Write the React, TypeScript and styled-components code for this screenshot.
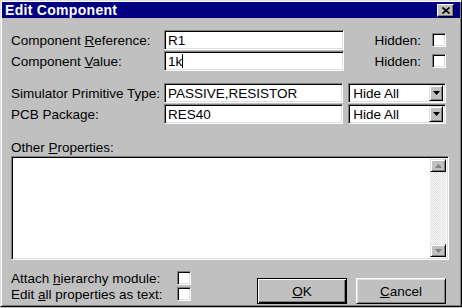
import React from 'react';
import styled, { createGlobalStyle } from 'styled-components';

const GlobalStyle = createGlobalStyle`
  html, body {
    margin: 0;
    padding: 0;
    background: #c0c0c0;
  }
  body {
    font-family: "Liberation Sans", Arial, sans-serif;
    font-size: 13.5px;
    color: #000;
  }
`;

const Window = styled.div`
  box-sizing: border-box;
  width: 462px;
  height: 307px;
  background: #c0c0c0;
  border: 1px solid;
  border-color: #dfdfdf #000 #000 #dfdfdf;
  box-shadow: inset 1px 1px #fff, inset -1px -1px #808080;
  padding: 1px;
  display: flex;
  flex-direction: column;
`;

const TitleBar = styled.div`
  height: 16px;
  background: #000080;
  display: flex;
  align-items: center;
  justify-content: space-between;
  padding: 0 6px 0 3px;
`;

const Title = styled.span`
  color: #fff;
  font-weight: bold;
  font-size: 14px;
  letter-spacing: 0.3px;
`;

const CloseButton = styled.div`
  box-sizing: border-box;
  width: 17px;
  height: 13px;
  background: #c0c0c0;
  border: 1px solid;
  border-color: #fff #000 #000 #fff;
  box-shadow: inset -1px -1px #808080;
  display: flex;
  align-items: center;
  justify-content: center;
`;

const Body = styled.div`
  flex: 1;
  display: flex;
  flex-direction: column;
  padding: 12px 14px 0 9px;
`;

const FieldGroup = styled.div<{ $mt?: number }>`
  display: flex;
  flex-direction: column;
  gap: 1px;
  margin-top: ${(p) => p.$mt ?? 0}px;
`;

const Row = styled.div`
  display: flex;
  align-items: center;
  height: 20px;
`;

const Label = styled.span`
  width: 153px;
  flex-shrink: 0;
  white-space: nowrap;
`;

const Key = styled.span`
  text-decoration: underline;
  text-underline-offset: 1px;
`;

const Field = styled.div`
  box-sizing: border-box;
  width: 180px;
  height: 20px;
  background: #fff;
  border: 1px solid;
  border-color: #808080 #fff #fff #808080;
  box-shadow: inset 1px 1px #000, inset -1px -1px #dfdfdf;
  padding: 0 3px;
  display: flex;
  align-items: center;
  white-space: nowrap;
`;

const Caret = styled.span`
  display: inline-block;
  width: 1px;
  height: 14px;
  background: #000;
`;

const HiddenGroup = styled.div`
  margin-left: auto;
  display: flex;
  align-items: center;
  gap: 11px;
`;

const CheckBox = styled.div`
  box-sizing: border-box;
  width: 14px;
  height: 14px;
  background: #fff;
  border: 1px solid;
  border-color: #808080 #fff #fff #808080;
  box-shadow: inset 1px 1px #000, inset -1px -1px #dfdfdf;
`;

const Select = styled.div`
  box-sizing: border-box;
  width: 98px;
  height: 20px;
  margin-left: 5px;
  background: #fff;
  border: 1px solid;
  border-color: #808080 #fff #fff #808080;
  box-shadow: inset 1px 1px #000, inset -1px -1px #dfdfdf;
  padding: 2px 2px 2px 4px;
  display: flex;
  align-items: center;
  justify-content: space-between;
`;

const ArrowButton = styled.div<{ $w?: number; $h?: number }>`
  box-sizing: border-box;
  width: ${(p) => p.$w ?? 14}px;
  height: ${(p) => p.$h ?? 16}px;
  background: #c0c0c0;
  border: 1px solid;
  border-color: #dfdfdf #000 #000 #dfdfdf;
  box-shadow: inset 1px 1px #fff, inset -1px -1px #808080;
  display: flex;
  align-items: center;
  justify-content: center;
  flex-shrink: 0;
`;

const SectionLabel = styled.div`
  margin-top: 17px;
  height: 14px;
  line-height: 14px;
`;

const TextBox = styled.div`
  box-sizing: border-box;
  width: 438px;
  height: 104px;
  margin-top: 1px;
  background: #fff;
  border: 1px solid;
  border-color: #808080 #fff #fff #808080;
  box-shadow: inset 1px 1px #000, inset -1px -1px #dfdfdf;
  padding: 2px;
  display: flex;
  justify-content: flex-end;
`;

const ScrollBar = styled.div`
  width: 16px;
  display: flex;
  flex-direction: column;
  justify-content: space-between;
  background-color: #fff;
  background-image: repeating-conic-gradient(#dcdcdc 0 25%, #fff 0 50%);
  background-size: 2px 2px;
`;

const Footer = styled.div`
  margin-top: 10px;
  height: 34px;
  display: flex;
  align-items: flex-end;
  justify-content: space-between;
`;

const OptionList = styled.div`
  display: flex;
  flex-direction: column;
  gap: 2px;
  padding-bottom: 3px;
`;

const OptionRow = styled.div`
  display: flex;
  align-items: center;
  height: 14px;
`;

const OptionLabel = styled.span`
  width: 166px;
  white-space: nowrap;
`;

const ButtonRow = styled.div`
  display: flex;
  gap: 9px;
`;

const Button = styled.div<{ $default?: boolean }>`
  box-sizing: border-box;
  width: 90px;
  height: 26px;
  background: #c0c0c0;
  display: flex;
  align-items: center;
  justify-content: center;
  border: 1px solid;
  border-color: ${(p) => (p.$default ? '#000' : '#fff #000 #000 #fff')};
  box-shadow: ${(p) =>
    p.$default
      ? 'inset 1px 1px #fff, inset -1px -1px #000, inset -2px -2px #808080'
      : 'inset 1px 1px #dfdfdf, inset -1px -1px #808080'};
`;

const DownArrow = ({ color = '#000' }: { color?: string }) => (
  <svg width="7" height="4" viewBox="0 0 7 4">
    <polygon points="0,0 7,0 3.5,4" fill={color} />
  </svg>
);

const UpArrow = ({ color = '#808080' }: { color?: string }) => (
  <svg width="7" height="4" viewBox="0 0 7 4">
    <polygon points="0,4 7,4 3.5,0" fill={color} />
  </svg>
);

const CloseIcon = () => (
  <svg width="8" height="7" viewBox="0 0 8 7">
    <path d="M0.5 0.5 L7.5 6.5 M7.5 0.5 L0.5 6.5" stroke="#000" strokeWidth="1.6" />
  </svg>
);

export default function App() {
  return (
    <>
      <GlobalStyle />
      <Window>
        <TitleBar>
          <Title>Edit Component</Title>
          <CloseButton>
            <CloseIcon />
          </CloseButton>
        </TitleBar>

        <Body>
          <FieldGroup>
            <Row>
              <Label>
                Component <Key>R</Key>eference:
              </Label>
              <Field>R1</Field>
              <HiddenGroup>
                <span>Hidden:</span>
                <CheckBox />
              </HiddenGroup>
            </Row>
            <Row>
              <Label>
                Component <Key>V</Key>alue:
              </Label>
              <Field>
                1k
                <Caret />
              </Field>
              <HiddenGroup>
                <span>Hidden:</span>
                <CheckBox />
              </HiddenGroup>
            </Row>
          </FieldGroup>

          <FieldGroup $mt={12}>
            <Row>
              <Label>Simulator Primitive Type:</Label>
              <Field>PASSIVE,RESISTOR</Field>
              <Select>
                <span>Hide All</span>
                <ArrowButton>
                  <DownArrow />
                </ArrowButton>
              </Select>
            </Row>
            <Row>
              <Label>PCB Package:</Label>
              <Field>RES40</Field>
              <Select>
                <span>Hide All</span>
                <ArrowButton>
                  <DownArrow />
                </ArrowButton>
              </Select>
            </Row>
          </FieldGroup>

          <SectionLabel>
            Other <Key>P</Key>roperties:
          </SectionLabel>
          <TextBox>
            <ScrollBar>
              <ArrowButton $w={16} $h={13}>
                <UpArrow />
              </ArrowButton>
              <ArrowButton $w={16} $h={13}>
                <DownArrow color="#808080" />
              </ArrowButton>
            </ScrollBar>
          </TextBox>

          <Footer>
            <OptionList>
              <OptionRow>
                <OptionLabel>
                  Attach <Key>h</Key>ierarchy module:
                </OptionLabel>
                <CheckBox />
              </OptionRow>
              <OptionRow>
                <OptionLabel>
                  Edit <Key>a</Key>ll properties as text:
                </OptionLabel>
                <CheckBox />
              </OptionRow>
            </OptionList>
            <ButtonRow>
              <Button $default>
                <Key>O</Key>K
              </Button>
              <Button>
                <Key>C</Key>ancel
              </Button>
            </ButtonRow>
          </Footer>
        </Body>
      </Window>
    </>
  );
}
